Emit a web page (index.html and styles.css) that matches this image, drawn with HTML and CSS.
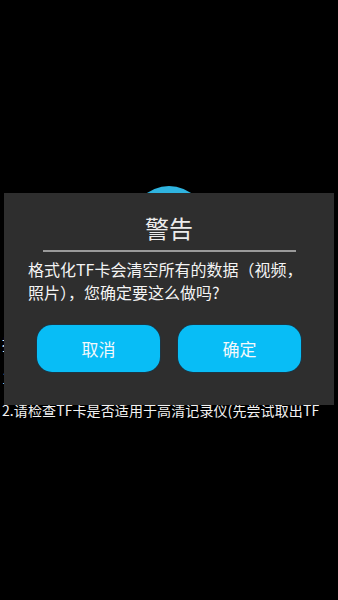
FILE: index.html
```html
<!DOCTYPE html>
<html lang="zh">
<head>
<meta charset="utf-8">
<link rel="stylesheet" href="styles.css">
</head>
<body>
<div class="page">
  <div class="circle"></div>
  <div class="help">
    <p class="l1">提示：</p>
    <p class="l2">1.</p>
    <p class="l3">2.请检查TF卡是否适用于高清记录仪(先尝试取出TF</p>
  </div>
  <div class="dialog">
    <div class="title">警告</div>
    <div class="rule"></div>
    <div class="msg">格式化TF卡会清空所有的数据（视频，照片），您确定要这么做吗?</div>
    <div class="actions">
      <div class="btn">取消</div>
      <div class="btn">确定</div>
    </div>
  </div>
</div>
</body>
</html>
```
FILE: styles.css
```css
html, body {
  margin: 0;
  padding: 0;
  background: #000;
}
body {
  width: 338px;
  height: 600px;
  overflow: hidden;
  font-family: "Noto Sans CJK SC", "Noto Sans", sans-serif;
}
.page {
  position: relative;
  width: 338px;
  height: 600px;
  padding-top: 186px;
  box-sizing: border-box;
}
.circle {
  width: 76px;
  height: 76px;
  border-radius: 50%;
  background: #2fb4e0;
  margin: 0 auto;
}
.help {
  padding-left: 2px;
  color: #f2f2f2;
  font-size: 14px;
  line-height: 20px;
  white-space: nowrap;
}
.help p {
  margin: 0;
}
.l1 { margin-top: 72px !important; font-size: 15px; }
.l2 { margin-top: 14px !important; font-size: 15px; }
.l3 { margin-top: 12px !important; letter-spacing: 0.1px; }
.dialog {
  position: absolute;
  left: 4px;
  top: 193px;
  width: 330px;
  height: 212px;
  background: #2e2e2e;
  box-sizing: border-box;
  padding-top: 20px;
}
.title {
  text-align: center;
  color: #ececec;
  font-size: 24px;
  line-height: 30px;
  height: 30px;
}
.rule {
  height: 2px;
  background: #9a9a9a;
  margin: 7px 38px 0 39px;
}
.msg {
  color: #f4f4f4;
  font-size: 16px;
  line-height: 23px;
  padding: 6px 24px 0 24px;
}
.actions {
  display: flex;
  gap: 18px;
  padding: 0 33px;
  margin-top: 21px;
}
.btn {
  width: 123px;
  height: 47px;
  border-radius: 15px;
  background: #08bdf6;
  box-shadow: 0 0 0 1px #1d3644;
  color: #f4f8fb;
  font-size: 17px;
  display: flex;
  align-items: center;
  justify-content: center;
}
```
